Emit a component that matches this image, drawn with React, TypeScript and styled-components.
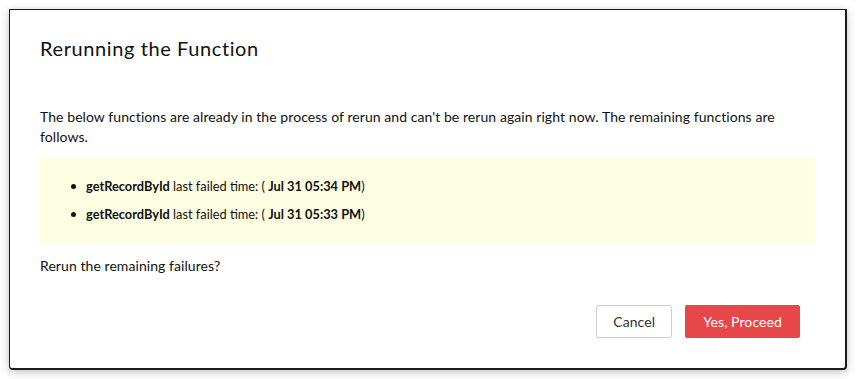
import React from 'react';
import styled, { createGlobalStyle } from 'styled-components';

const GlobalStyle = createGlobalStyle`
    body {
        margin: 0;
        background: #ffffff;
        font-family: "Lato", "Liberation Sans", sans-serif;
    }
`;

const Page = styled.div`
    padding: 9px;
    height: 379px;
    box-sizing: border-box;
`;

const Dialog = styled.div`
    width: 838px;
    height: 361px;
    box-sizing: border-box;
    background: #ffffff;
    border: 1px solid #1a1a1a;
    border-right-width: 2px;
    border-bottom-width: 2px;
    border-radius: 0 0 4px 4px;
    box-shadow: 0 2px 8px rgba(0, 0, 0, 0.25);
    padding: 26px 30px 0 30px;
    display: flex;
    flex-direction: column;
`;

const Title = styled.h2`
    margin: 0;
    font-size: 20px;
    font-weight: 400;
    letter-spacing: 0.6px;
    line-height: 24px;
    color: #111;
`;

const Text = styled.p`
    margin: 0;
    font-size: 14px;
    letter-spacing: 0.07px;
    line-height: 20px;
    color: #111;
`;

const Intro = styled(Text)`
    margin-top: 47px;
    padding-right: 30px;
`;

const FailList = styled.ul`
    margin: 10px 0 0 0;
    padding: 15px 0 16px 46px;
    background: #fefee2;
    list-style: none;
`;

const FailItem = styled.li`
    position: relative;
    font-size: 12.8px;
    line-height: 28px;
    color: #111;

    &::before {
        content: '';
        position: absolute;
        left: -15px;
        top: 12px;
        width: 5px;
        height: 5px;
        border-radius: 50%;
        background: #111;
    }
`;

const Bold = styled.b`
    font-weight: 700;
`;

const Question = styled(Text)`
    margin-top: 12px;
`;

const Footer = styled.div`
    display: flex;
    justify-content: flex-end;
    gap: 13px;
    margin-top: 29px;
    padding-right: 15px;
`;

const Button = styled.button<{ primary?: boolean }>`
    height: 33px;
    padding: 0 ${({ primary }) => (primary ? '17px' : '16px')};
    font-family: inherit;
    font-size: 14px;
    letter-spacing: 0.1px;
    border-radius: 2px;
    cursor: pointer;
    border: 1px solid ${({ primary }) => (primary ? '#e8474a' : '#cfcfcf')};
    background: ${({ primary }) => (primary ? '#e8474a' : '#ffffff')};
    color: ${({ primary }) => (primary ? '#ffffff' : '#333333')};
`;

const failures = ['Jul 31 05:34 PM', 'Jul 31 05:33 PM'];

export default function App() {
    return (
        <Page>
            <GlobalStyle />
            <Dialog>
                <Title>Rerunning the Function</Title>
                <Intro>
                    The below functions are already in the process of rerun and can't be rerun again right now. The remaining functions are follows.
                </Intro>
                <FailList>
                    {failures.map((time) => (
                        <FailItem key={time}>
                            <Bold>getRecordById</Bold> last failed time: ( <Bold>{time}</Bold>)
                        </FailItem>
                    ))}
                </FailList>
                <Question>Rerun the remaining failures?</Question>
                <Footer>
                    <Button>Cancel</Button>
                    <Button primary>Yes, Proceed</Button>
                </Footer>
            </Dialog>
        </Page>
    );
}
